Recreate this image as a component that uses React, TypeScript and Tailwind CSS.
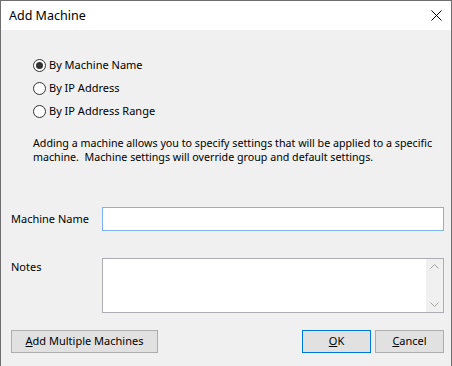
import { useState } from "react";

const FONT = "font-['Noto_Sans','Open_Sans',sans-serif]";

const options = ["By Machine Name", "By IP Address", "By IP Address Range"];

function Radio({ label, checked, onClick }: { label: string; checked: boolean; onClick: () => void }) {
  return (
    <button type="button" onClick={onClick} className="flex h-[23px] items-center gap-[3px] text-left">
      <span className="flex h-[13px] w-[13px] items-center justify-center rounded-full border border-[#333] bg-white">
        {checked && <span className="block h-[7px] w-[7px] rounded-full bg-[#333]" />}
      </span>
      <span className="text-[11px] text-black">{label}</span>
    </button>
  );
}

function WinButton({ children, primary, className = "" }: { children: React.ReactNode; primary?: boolean; className?: string }) {
  return (
    <button
      type="button"
      className={`flex h-[23px] items-center justify-center border bg-[#e1e1e1] text-[11px] text-black ${
        primary ? "border-[#0078d7]" : "border-[#adadad]"
      } ${className}`}
    >
      {children}
    </button>
  );
}

export default function App() {
  const [mode, setMode] = useState(0);

  return (
    <div className={`flex h-[366px] w-[452px] flex-col overflow-hidden border-x border-t border-[#6e6e6e] bg-[#f0f0f0] ${FONT}`}>
      {/* Title bar */}
      <div className="flex h-[29px] items-center justify-between bg-white pl-2 pr-[9px]">
        <span className="pt-[2px] text-[12.5px] text-black">Add Machine</span>
        <svg width="11" height="11" viewBox="0 0 11 11" aria-hidden>
          <path d="M0.5 0.5 L10.5 10.5 M10.5 0.5 L0.5 10.5" stroke="#000" strokeWidth="1" fill="none" />
        </svg>
      </div>

      <div className="flex flex-1 flex-col pl-[10px] pr-[7px]">
        {/* Radio group */}
        <div className="mt-[24px] flex flex-col pl-[22px]">
          {options.map((o, i) => (
            <Radio key={o} label={o} checked={mode === i} onClick={() => setMode(i)} />
          ))}
        </div>

        <p className="mt-[13px] pl-[22px] text-[10.7px] leading-[14px] text-black">
          Adding a machine allows you to specify settings that will be applied to a specific
          <br />
          machine.&nbsp; Machine settings will override group and default settings.
        </p>

        {/* Machine name */}
        <div className="mt-[43px] flex items-center">
          <label className="w-[91px] text-[11px] text-black">Machine Name</label>
          <input className="h-[24px] flex-1 border border-[#7eb4ea] bg-white px-1 text-[11px] outline-none" />
        </div>

        {/* Notes */}
        <div className="mt-[27px] flex items-start">
          <label className="w-[91px] pt-[1px] text-[11px] text-black">Notes</label>
          <div className="flex h-[55px] flex-1 border border-[#abadb3] bg-white">
            <textarea className="flex-1 resize-none bg-white px-1 text-[11px] outline-none" />
            <div className="flex w-[17px] flex-col items-center justify-between bg-[#f0f0f0] py-[5px]">
              <svg width="9" height="5" viewBox="0 0 9 5" aria-hidden>
                <path d="M0.5 4.5 L4.5 0.5 L8.5 4.5" stroke="#a3a3a3" fill="none" />
              </svg>
              <svg width="9" height="5" viewBox="0 0 9 5" aria-hidden>
                <path d="M0.5 0.5 L4.5 4.5 L8.5 0.5" stroke="#a3a3a3" fill="none" />
              </svg>
            </div>
          </div>
        </div>

        {/* Buttons */}
        <div className="mt-[17px] flex items-center">
          <WinButton className="w-[147px]">
            <span>
              <u>A</u>dd Multiple Machines
            </span>
          </WinButton>
          <div className="ml-auto flex gap-[4px]">
            <WinButton primary className="w-[69px]">
              <span>
                <u>O</u>K
              </span>
            </WinButton>
            <WinButton className="w-[69px]">
              <span>
                <u>C</u>ancel
              </span>
            </WinButton>
          </div>
        </div>
      </div>
    </div>
  );
}
